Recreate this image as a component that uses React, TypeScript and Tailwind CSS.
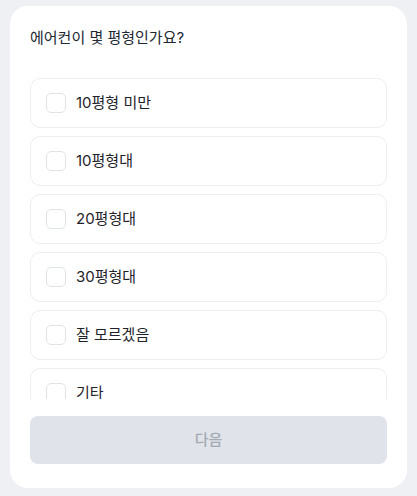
import { useState } from 'react';

const options = ['10평형 미만', '10평형대', '20평형대', '30평형대', '잘 모르겠음', '기타'];

export default function App() {
  const [selected, setSelected] = useState<string[]>([]);

  const toggle = (opt: string) => {
    setSelected((prev) => (prev.includes(opt) ? prev.filter((o) => o !== opt) : [...prev, opt]));
  };

  return (
    <div
      className="h-[496px] w-full bg-[#eef0f4] px-[10px] pt-[6px] pb-[8px]"
      style={{ fontFamily: 'Inter, "Noto Sans CJK KR", sans-serif' }}
    >
      <div className="flex h-full flex-col rounded-[18px] bg-white px-5 pt-5 pb-6">
        <h1 className="text-[15px] leading-6 font-normal text-[#222831]">에어컨이 몇 평형인가요?</h1>

        <div className="mt-7 flex-1 overflow-hidden">
          <div className="flex flex-col gap-2">
            {options.map((opt) => {
              const on = selected.includes(opt);
              return (
                <button
                  key={opt}
                  onClick={() => toggle(opt)}
                  className="flex h-[50px] items-center gap-[10px] rounded-[10px] border border-[#eceef1] px-[15px] text-left"
                >
                  <span
                    className={`flex h-5 w-5 items-center justify-center rounded-[5px] border-[1.5px] ${
                      on ? 'border-[#3b82f6] bg-[#3b82f6]' : 'border-[#dfe3e8] bg-white'
                    }`}
                  >
                    {on && (
                      <svg viewBox="0 0 16 16" className="h-3 w-3" fill="none" stroke="white" strokeWidth="2.2">
                        <path d="M3 8.5l3.2 3L13 4.5" strokeLinecap="round" strokeLinejoin="round" />
                      </svg>
                    )}
                  </span>
                  <span className="text-[15px] text-[#1f2329]">{opt}</span>
                </button>
              );
            })}
          </div>
        </div>

        <button
          disabled={selected.length === 0}
          className="mt-[17px] h-12 w-full rounded-[8px] bg-[#e0e4ea] text-[15px] font-medium text-[#a3aab4]"
        >
          다음
        </button>
      </div>
    </div>
  );
}
